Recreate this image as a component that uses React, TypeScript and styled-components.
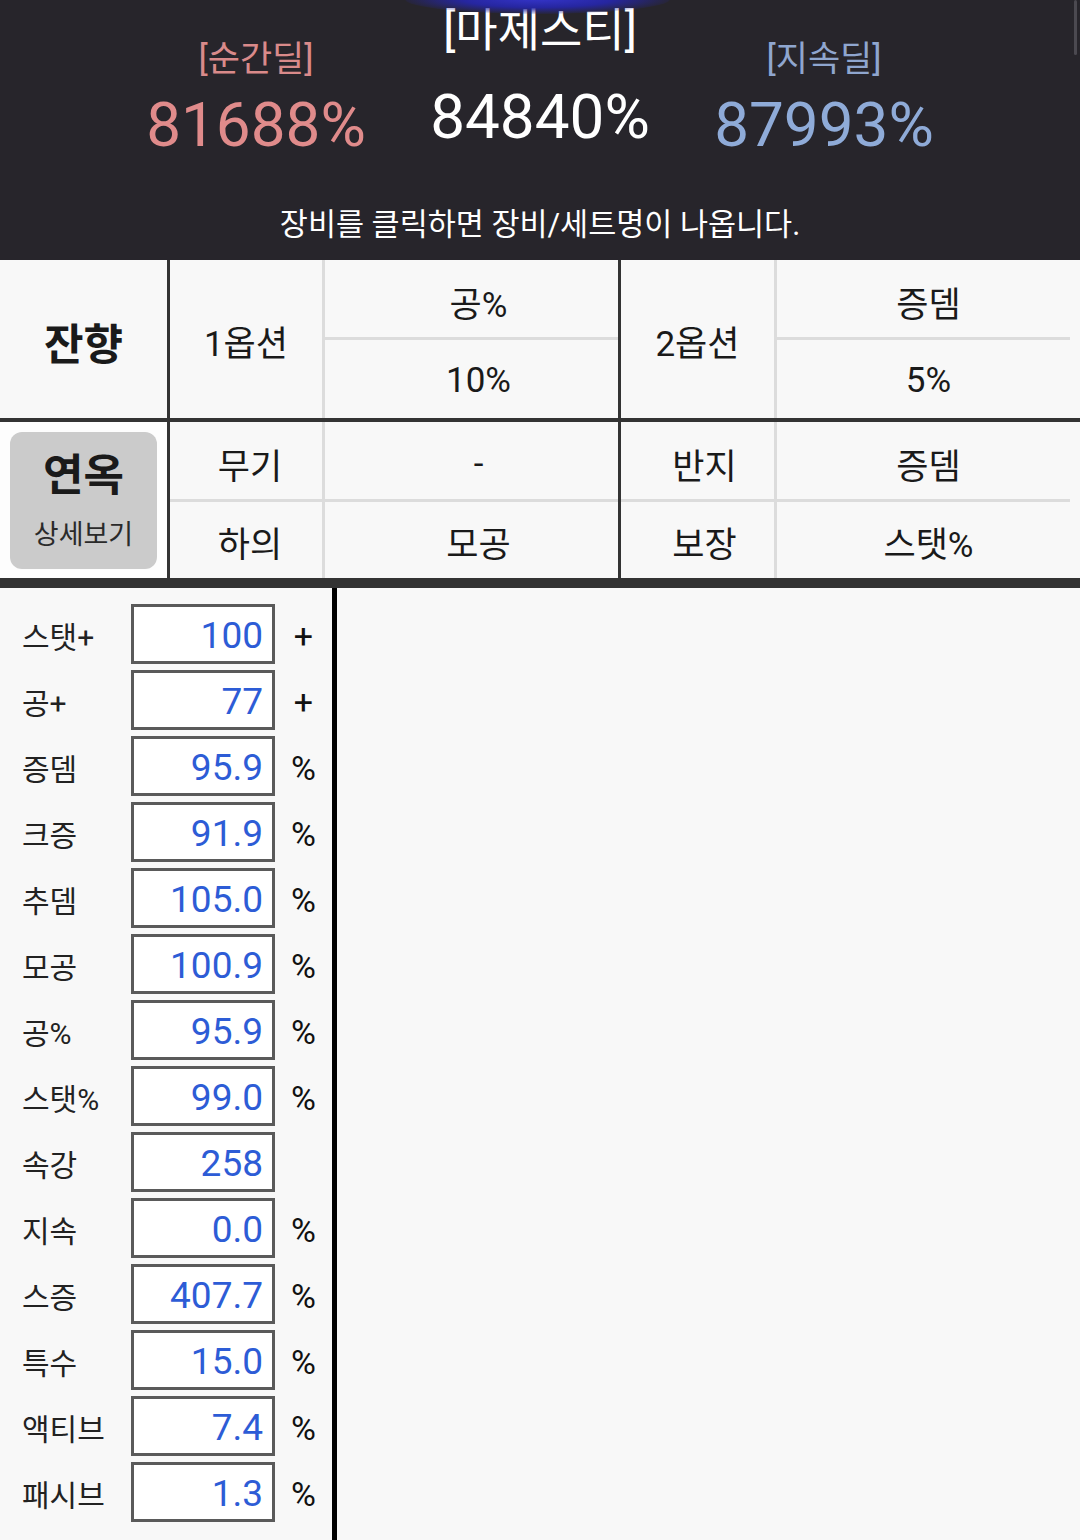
import React from "react";
import styled, { createGlobalStyle } from "styled-components";

const FONT = `"Roboto", "Noto Sans CJK KR", sans-serif`;

const GlobalStyle = createGlobalStyle`
  html, body {
    margin: 0;
    padding: 0;
    background: #f8f8f8;
  }
  body {
    font-family: ${FONT};
  }
  * {
    box-sizing: border-box;
  }
`;

type Line = "dark" | "light" | "none";

type CellData = {
  text: string;
  col: number;
  row: number;
  span?: boolean;
  size?: number;
  bold?: boolean;
  split?: boolean;
  short?: boolean;
  shift?: number;
};

const groups: { bottom: number; rows: number[]; cells: CellData[] }[] = [
  {
    bottom: 4,
    rows: [80, 78],
    cells: [
      { text: "잔향", col: 1, row: 1, span: true, size: 43, bold: true },
      { text: "1옵션", col: 2, row: 1, span: true },
      { text: "공%", col: 3, row: 1, split: true, shift: 14 },
      { text: "10%", col: 3, row: 2, shift: 14 },
      { text: "2옵션", col: 4, row: 1, span: true },
      { text: "증뎀", col: 5, row: 1, split: true, short: true },
      { text: "5%", col: 5, row: 2 },
    ],
  },
  {
    bottom: 10,
    rows: [80, 76],
    cells: [
      { text: "무기", col: 2, row: 1, split: true, shift: 8 },
      { text: "-", col: 3, row: 1, split: true, shift: 14 },
      { text: "반지", col: 4, row: 1, split: true, shift: 14 },
      { text: "증뎀", col: 5, row: 1, split: true, short: true },
      { text: "하의", col: 2, row: 2, shift: 8 },
      { text: "모공", col: 3, row: 2, shift: 14 },
      { text: "보장", col: 4, row: 2, shift: 14 },
      { text: "스탯%", col: 5, row: 2 },
    ],
  },
];

const lineFor: Record<number, Line> = { 1: "none", 2: "dark", 3: "light", 4: "dark", 5: "light" };

const stats = [
  { label: "스탯+", value: "100", unit: "+" },
  { label: "공+", value: "77", unit: "+" },
  { label: "증뎀", value: "95.9", unit: "%" },
  { label: "크증", value: "91.9", unit: "%" },
  { label: "추뎀", value: "105.0", unit: "%" },
  { label: "모공", value: "100.9", unit: "%" },
  { label: "공%", value: "95.9", unit: "%" },
  { label: "스탯%", value: "99.0", unit: "%" },
  { label: "속강", value: "258", unit: "" },
  { label: "지속", value: "0.0", unit: "%" },
  { label: "스증", value: "407.7", unit: "%" },
  { label: "특수", value: "15.0", unit: "%" },
  { label: "액티브", value: "7.4", unit: "%" },
  { label: "패시브", value: "1.3", unit: "%" },
];

const App = () => {
  return (
    <>
      <GlobalStyle />
      <Page>
        <Header>
          <Glow />
          <ScrollThumb />
          <ScoreRow>
            <Score>
              <ScoreLabel $color="#d98a8a">[순간딜]</ScoreLabel>
              <ScoreValue $color="#e08b8b">81688%</ScoreValue>
            </Score>
            <Score $main>
              <ScoreLabel $color="#ffffff" $main>
                [마제스티]
              </ScoreLabel>
              <ScoreValue $color="#ffffff" $main>
                84840%
              </ScoreValue>
            </Score>
            <Score>
              <ScoreLabel $color="#8fa6cf">[지속딜]</ScoreLabel>
              <ScoreValue $color="#8fabd8">87993%</ScoreValue>
            </Score>
          </ScoreRow>
          <Note>장비를 클릭하면 장비/세트명이 나옵니다.</Note>
        </Header>

        {groups.map((g, gi) => (
          <Group key={gi} $bottom={g.bottom} $rows={g.rows}>
            {gi === 1 && (
              <ButtonCell>
                <DetailButton type="button">
                  <DetailTitle>연옥</DetailTitle>
                  <DetailSub>상세보기</DetailSub>
                </DetailButton>
              </ButtonCell>
            )}
            {g.cells.map((c, ci) => (
              <Cell
                key={ci}
                $col={c.col}
                $row={c.row}
                $line={lineFor[c.col]}
                $span={!!c.span}
                $split={!!c.split}
                $short={!!c.short}
                $shift={c.shift || 0}
                $size={c.size || 35}
                $bold={!!c.bold}>
                {c.text}
              </Cell>
            ))}
          </Group>
        ))}

        <StatsArea>
          <StatsPanel>
            {stats.map((s) => (
              <StatRow key={s.label}>
                <StatLabel>{s.label}</StatLabel>
                <StatBox>{s.value}</StatBox>
                <StatUnit>{s.unit}</StatUnit>
              </StatRow>
            ))}
          </StatsPanel>
        </StatsArea>
      </Page>
    </>
  );
};

export default App;

const Page = styled.div`
  min-height: 100vh;
  display: flex;
  flex-direction: column;
  background: #f8f8f8;
  color: #1c1c1c;
`;

const Header = styled.header`
  position: relative;
  height: 260px;
  background: #27252b;
  display: flex;
  flex-direction: column;
  align-items: center;
  overflow: hidden;
`;

const Glow = styled.div`
  position: absolute;
  top: -16px;
  left: 405px;
  width: 265px;
  height: 30px;
  border-radius: 50%;
  background: radial-gradient(
    ellipse at center,
    #3434c8 0%,
    #2626a0 40%,
    rgba(40, 40, 140, 0) 75%
  );
`;

const ScrollThumb = styled.div`
  position: absolute;
  top: 0;
  right: 3px;
  width: 3px;
  height: 55px;
  border-radius: 2px;
  background: #4b4950;
`;

const ScoreRow = styled.div`
  display: flex;
  justify-content: center;
`;

const Score = styled.div<{ $main?: boolean }>`
  width: 284px;
  display: flex;
  flex-direction: column;
  align-items: center;
  padding-top: ${(p) => (p.$main ? "2px" : "37px")};
`;

const ScoreLabel = styled.div<{ $color: string; $main?: boolean }>`
  font-size: ${(p) => (p.$main ? "46px" : "35px")};
  line-height: ${(p) => (p.$main ? "56px" : "46px")};
  color: ${(p) => p.$color};
  white-space: nowrap;
`;

const ScoreValue = styled.div<{ $color: string; $main?: boolean }>`
  font-size: 62px;
  line-height: 60px;
  margin-top: ${(p) => (p.$main ? "29px" : "12px")};
  color: ${(p) => p.$color};
  white-space: nowrap;
`;

const Note = styled.div`
  margin-top: auto;
  margin-bottom: 15px;
  font-size: 30.5px;
  line-height: 40px;
  color: #ffffff;
`;

const Group = styled.div<{ $bottom: number; $rows: number[] }>`
  display: grid;
  grid-template-columns: 167px 155px 296px 156px 306px;
  grid-template-rows: ${(p) => p.$rows.map((r) => `${r}px`).join(" ")};
  border-bottom: ${(p) => p.$bottom}px solid #333333;
  background: #f8f8f8;
`;

const Cell = styled.div<{
  $col: number;
  $row: number;
  $line: Line;
  $span: boolean;
  $split: boolean;
  $short: boolean;
  $shift: number;
  $size: number;
  $bold: boolean;
}>`
  grid-column: ${(p) => p.$col};
  grid-row: ${(p) => (p.$span ? "1 / span 2" : p.$row)};
  display: flex;
  align-items: center;
  justify-content: center;
  padding-left: ${(p) => p.$shift}px;
  padding-top: 3px;
  font-size: ${(p) => p.$size}px;
  font-weight: ${(p) => (p.$bold ? 700 : 400)};
  color: #1a1a1a;
  border-left: ${(p) =>
    p.$line === "dark"
      ? "3px solid #333333"
      : p.$line === "light"
      ? "3px solid #dcdcdc"
      : "none"};
  background: ${(p) =>
    p.$split
      ? `linear-gradient(#dcdcdc, #dcdcdc) left bottom / ${
          p.$short ? "calc(100% - 10px)" : "100%"
        } 3px no-repeat, #f8f8f8`
      : "#f8f8f8"};
`;

const ButtonCell = styled.div`
  grid-column: 1;
  grid-row: 1 / span 2;
  display: flex;
  align-items: center;
  justify-content: center;
  background: #fdfdfd;
`;

const DetailButton = styled.button`
  width: 147px;
  height: 137px;
  padding: 0;
  border: none;
  border-radius: 12px;
  background: #cbcbcb;
  display: flex;
  flex-direction: column;
  align-items: center;
  justify-content: center;
  font-family: ${FONT};
  color: #1a1a1a;
  cursor: pointer;
`;

const DetailTitle = styled.div`
  font-size: 44px;
  font-weight: 700;
  line-height: 56px;
`;

const DetailSub = styled.div`
  margin-top: 14px;
  font-size: 27px;
  line-height: 34px;
  color: #2a2a2a;
`;

const StatsArea = styled.div`
  flex: 1;
  display: flex;
`;

const StatsPanel = styled.div`
  width: 337px;
  border-right: 5px solid #000000;
  padding: 16px 0 0 22px;
  display: flex;
  flex-direction: column;
  gap: 6px;
`;

const StatRow = styled.div`
  display: grid;
  grid-template-columns: 109px 144px 1fr;
  align-items: center;
  height: 60px;
`;

const StatLabel = styled.div`
  font-size: 30px;
  padding-top: 2px;
  color: #222222;
  white-space: nowrap;
`;

const StatBox = styled.div`
  height: 60px;
  border: 3px solid #5a5a5a;
  background: #ffffff;
  display: flex;
  align-items: center;
  justify-content: flex-end;
  padding: 3px 9px 0 0;
  font-size: 37px;
  color: #2d5cd6;
`;

const StatUnit = styled.div`
  text-align: center;
  padding-top: 3px;
  font-size: 34px;
  color: #111111;
`;
